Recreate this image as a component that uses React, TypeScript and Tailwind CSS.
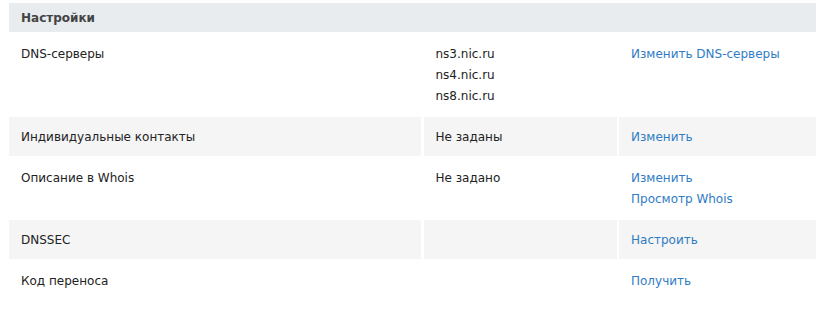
const rows = [
  { label: "DNS-серверы", values: ["ns3.nic.ru", "ns4.nic.ru", "ns8.nic.ru"], links: ["Изменить DNS-серверы"], shaded: false },
  { label: "Индивидуальные контакты", values: ["Не заданы"], links: ["Изменить"], shaded: true },
  { label: "Описание в Whois", values: ["Не задано"], links: ["Изменить", "Просмотр Whois"], shaded: false },
  { label: "DNSSEC", values: [], links: ["Настроить"], shaded: true },
  { label: "Код переноса", values: [], links: ["Получить"], shaded: false },
];

export default function App() {
  return (
    <main
      className="w-[816px] h-[309px] overflow-hidden bg-white pl-[9px] pt-[3px] text-[12px] leading-[21px] text-[#222]"
      style={{ fontFamily: '"DejaVu Sans", Verdana, sans-serif' }}
    >
      {/* header */}
      <div className="h-[29px] bg-[#e8ecef] pl-3 pt-[1px] flex items-center font-bold text-[#444]">
        Настройки
      </div>

      <div className="flex flex-col gap-[2px] pt-[2px]">
        {rows.map((row) => {
          const bg = row.shaded ? "bg-[#f5f5f5]" : "bg-white";
          return (
            <div key={row.label} className="grid grid-cols-[412px_193px_1fr] gap-x-[2.5px]">
              <div className={`${bg} px-3 pt-[10px] pb-[8px]`}>{row.label}</div>
              <div className={`${bg} px-3 pt-[10px] pb-[8px]`}>
                {row.values.map((v) => (
                  <div key={v}>{v}</div>
                ))}
              </div>
              <div className={`${bg} px-3 pt-[10px] pb-[8px]`}>
                {row.links.map((l) => (
                  <div key={l}>
                    <a href="#" className="text-[#2f7cc4]">
                      {l}
                    </a>
                  </div>
                ))}
              </div>
            </div>
          );
        })}
      </div>
    </main>
  );
}
